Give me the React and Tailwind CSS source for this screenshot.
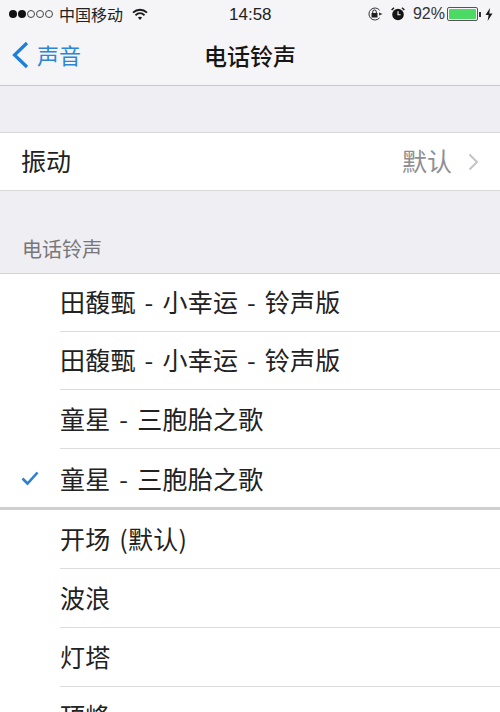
const font = { fontFamily: '"Noto Sans CJK SC", "Liberation Sans", sans-serif' };

function Row({ children, checked, heavy, last, h = 'h-[59px]' }) {
  return (
    <div className={`relative flex items-center ${h} pl-[60px] shrink-0`}>
      {checked && (
        <svg className="absolute left-[21px] top-[21px]" width="18" height="16" viewBox="0 0 18 16" fill="none">
          <path d="M1.5 8.5 L6.5 13.5 L16.5 2.5" stroke="#2f7fd0" strokeWidth="2.6" />
        </svg>
      )}
      <span className="text-[25px] leading-none text-[#222222] font-normal tracking-[0.25px] [word-spacing:3px] pb-[3px]">{children}</span>
      {!last && !heavy && <div className="absolute left-[60px] right-0 bottom-0 h-px bg-[#dcdcdf]" />}
      {heavy && <div className="absolute left-0 right-0 bottom-0 h-[3px] bg-[#cfcfd1]" />}
    </div>
  );
}

export default function App() {
  return (
    <div className="w-[500px] h-[712px] overflow-hidden bg-[#eeeef3] flex flex-col" style={font}>
      <div className="h-[86px] shrink-0 bg-[#f5f5f8] border-b border-[#c9c9cc] flex flex-col">
        <div className="h-[28px] flex items-center justify-between pl-[9px] pr-[7px] text-[#222222] relative">
          <div className="flex items-center">
            <div className="flex items-center gap-px">
              <span className="w-[8px] h-[8px] rounded-full bg-[#111111]" />
              <span className="w-[8px] h-[8px] rounded-full bg-[#111111]" />
              <span className="w-[8px] h-[8px] rounded-full border border-[#444444]" />
              <span className="w-[8px] h-[8px] rounded-full border border-[#444444]" />
              <span className="w-[8px] h-[8px] rounded-full border border-[#444444]" />
            </div>
            <span className="ml-[6px] text-[16px] leading-none font-normal pb-px">中国移动</span>
            <svg className="ml-[9px]" width="16" height="13" viewBox="0 0 17 13" fill="none">
              <path d="M1 4.6 C5.5 0.4 11.5 0.4 16 4.6" stroke="#1a1a1a" strokeWidth="1.9" />
              <path d="M3.7 7.3 C6.6 4.6 10.4 4.6 13.3 7.3" stroke="#1a1a1a" strokeWidth="1.9" />
              <path d="M6.3 9.8 C7.7 8.6 9.3 8.6 10.7 9.8 L8.5 12.4 Z" fill="#1a1a1a" />
            </svg>
          </div>
          <span className="absolute left-[229px] text-[17px] leading-none font-medium" style={{ fontFamily: '"Liberation Sans", sans-serif' }}>14:58</span>
          <div className="flex items-center">
            <svg width="16" height="14" viewBox="0 0 16 14" fill="none">
              <path d="M12.6 3.2 A6 6 0 1 0 12.6 10.8" stroke="#333333" strokeWidth="1" />
              <path d="M12 5.5 L15.5 7 L12 8.5 Z" fill="#333333" />
              <rect x="4.5" y="6" width="6" height="4.5" fill="#222222" />
              <path d="M5.7 6 V4.8 A1.8 1.8 0 0 1 9.3 4.8 V6" stroke="#222222" strokeWidth="1" />
            </svg>
            <svg className="ml-[8px]" width="14" height="14" viewBox="0 0 14 14" fill="none">
              <circle cx="7" cy="7.5" r="5.8" fill="#141414" />
              <path d="M7 4.2 V7.7 H9.6" stroke="#ffffff" strokeWidth="1.1" />
              <path d="M0.6 3 L3 0.8 M13.4 3 L11 0.8" stroke="#141414" strokeWidth="1.4" />
            </svg>
            <span className="ml-[8px] text-[16px] leading-none text-[#333333]" style={{ fontFamily: '"Liberation Sans", sans-serif' }}>92%</span>
            <div className="ml-[2px] w-[31px] h-[14px] rounded-[2px] border border-[#555555] p-px">
              <div className="w-full h-full bg-[#4cd964] rounded-[1px]" />
            </div>
            <div className="ml-px w-[2px] h-[5px] bg-[#333333]" />
            <svg className="ml-[4px]" width="8" height="13" viewBox="0 0 8 13">
              <path d="M5 0 L0.5 7 H3.6 L2.6 13 L7.5 5.4 H4.3 Z" fill="#1a1a1a" />
            </svg>
          </div>
        </div>
        <div className="relative flex-1 flex items-center justify-center">
          <div className="absolute left-[11px] top-[13px] flex items-center">
            <svg width="19" height="28" viewBox="0 0 19 28" fill="none">
              <path d="M16 2 L3.5 14 L16 26" stroke="#1c7fdc" strokeWidth="3.2" />
            </svg>
            <span className="ml-[7px] text-[22px] leading-none font-normal text-[#2c86d4] pb-[3px]">声音</span>
          </div>
          <span className="text-[23px] leading-none font-medium text-[#161616] pb-[3px]">电话铃声</span>
        </div>
      </div>

      <div className="h-[46px] shrink-0" />

      <div className="h-[59px] shrink-0 bg-white border-y border-[#d8d8dc] flex items-center justify-between pl-[21px] pr-[21px]">
        <span className="text-[25px] leading-none font-normal text-[#222222] pb-[3px]">振动</span>
        <div className="flex items-center">
          <span className="text-[25px] leading-none font-normal text-[#8e8e93] pb-[3px]">默认</span>
          <svg className="ml-[16px]" width="11" height="18" viewBox="0 0 11 18" fill="none">
            <path d="M1.5 1.5 L9 9 L1.5 16.5" stroke="#c4c4c8" strokeWidth="2" />
          </svg>
        </div>
      </div>

      <div className="h-[82px] shrink-0 flex items-end pl-[22px] pb-[14px]">
        <span className="text-[20px] leading-none font-normal text-[#77777b]">电话铃声</span>
      </div>

      <div className="flex-1 bg-white border-t border-[#d4d4d8] flex flex-col">
        <Row h="h-[58px]">田馥甄 - 小幸运 - 铃声版</Row>
        <Row h="h-[58px]">田馥甄 - 小幸运 - 铃声版</Row>
        <Row>童星 - 三胞胎之歌</Row>
        <Row checked heavy h="h-[61px]">童星 - 三胞胎之歌</Row>
        <Row>开场 (默认)</Row>
        <Row>波浪</Row>
        <Row>灯塔</Row>
        <Row last>顶峰</Row>
      </div>
    </div>
  );
}
